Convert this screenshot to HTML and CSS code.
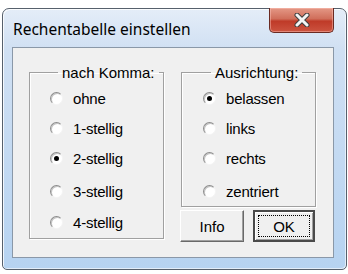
FILE: index.html
```html
<!DOCTYPE html>
<html>
  <head>
    <meta charset="utf-8" />
    <link rel="stylesheet" href="styles.css">
  </head>
  <body>
    <div class="window">
      <div class="titlebar">
        <span class="title">Rechentabelle einstellen</span>
        <button class="close">
          <svg width="16" height="14" viewBox="0 0 16 14">
            <path d="M3 2 L13 12 M13 2 L3 12" stroke="#3e3e3e" stroke-width="5" stroke-linecap="round" />
            <path d="M3 2 L13 12 M13 2 L3 12" stroke="#f4f4f4" stroke-width="3" stroke-linecap="round" />
          </svg>
        </button>
      </div>
      <div class="client">
        <fieldset class="group group-komma">
          <legend>nach Komma:</legend>
          <label class="option"><span class="radio"></span>ohne</label>
          <label class="option"><span class="radio"></span>1-stellig</label>
          <label class="option"><span class="radio checked"></span>2-stellig</label>
          <label class="option"><span class="radio"></span>3-stellig</label>
          <label class="option"><span class="radio"></span>4-stellig</label>
        </fieldset>
        <div class="side">
          <fieldset class="group group-align">
            <legend>Ausrichtung:</legend>
            <label class="option"><span class="radio checked"></span>belassen</label>
            <label class="option"><span class="radio"></span>links</label>
            <label class="option"><span class="radio"></span>rechts</label>
            <label class="option"><span class="radio"></span>zentriert</label>
          </fieldset>
          <div class="buttons">
            <button class="btn btn-info">Info</button>
            <button class="btn btn-ok"><span class="focus">OK</span></button>
          </div>
        </div>
      </div>
    </div>
  </body>
</html>
```

FILE: styles.css
```css
* {
  margin: 0;
  padding: 0;
  box-sizing: border-box;
}

body {
  background-color: #fff;
  font-family: 'Liberation Sans', Arial, sans-serif;
  font-size: 15px;
  color: #000;
}

/* Fensterrahmen */
.window {
  width: 345px;
  height: 262px;
  margin: 8px 0 0 2px;
  border: 1px solid #56606c;
  border-radius: 7px 7px 5px 5px;
  background: linear-gradient(#e4edf8, #d0e0f3 40px, #b6d3f1);
  box-shadow: inset 1px 1px 0 rgba(255, 255, 255, 0.8), inset -1px -1px 0 rgba(255, 255, 255, 0.6);
}

.titlebar {
  height: 38px;
  display: flex;
  align-items: flex-start;
}

.title {
  font-family: 'Noto Sans', sans-serif;
  font-size: 15.5px;
  margin: 9px 0 0 10px;
  color: #000;
}

.close {
  margin-left: auto;
  margin-right: 12px;
  margin-top: -1px;
  width: 65px;
  height: 25px;
  border: 1px solid #6a2a22;
  border-top: none;
  border-radius: 0 0 5px 5px;
  background: linear-gradient(#e49886, #d06e5a 45%, #bf3a28 55%, #cc5440);
  box-shadow: inset 0 0 0 1px rgba(255, 200, 190, 0.45);
  display: flex;
  align-items: center;
  justify-content: center;
}

/* Client-Bereich */
.client {
  height: 211px;
  margin: 0 12px 0 9px;
  border: 1px solid #8a98a8;
  background-color: #f0f0f0;
  display: flex;
  align-items: flex-start;
  gap: 17px;
  padding: 16px 0 0 16px;
}

.group {
  width: 135px;
  border: 1px solid #a0a0a0;
  box-shadow: inset 1px 1px 0 #fff, 1px 1px 0 #fff;
  padding: 2px 0 1px 20px;
}

.group legend {
  margin-left: 8px;
  padding: 0 4px;
  line-height: 17px;
}

.group-align {
  padding-left: 21px;
  padding-bottom: 0;
}

.option {
  display: flex;
  align-items: center;
  height: 30px;
  gap: 10px;
  letter-spacing: -0.2px;
}

.option:nth-of-type(4) {
  margin-top: 3px;
}

.group-komma .option:nth-of-type(5) {
  margin-top: 1px;
}

.radio {
  width: 13px;
  height: 13px;
  border-radius: 50%;
  background-color: #fff;
  border: 1px solid;
  border-color: #8c8c8c #f4f4f4 #f4f4f4 #8c8c8c;
  box-shadow: inset 1px 1px 0 #c4c4c4;
  display: flex;
  align-items: center;
  justify-content: center;
}

.radio.checked::after {
  content: '';
  width: 5px;
  height: 5px;
  border-radius: 50%;
  background-color: #000;
}

.side {
  width: 134px;
}

.buttons {
  display: flex;
  justify-content: space-between;
  margin: 3px 0 0 -1px;
  width: 135px;
}

.btn {
  height: 32px;
  font-family: 'Liberation Sans', Arial, sans-serif;
  font-size: 15px;
  background-color: #f0f0f0;
  border: 1px solid;
  border-color: #fff #696969 #696969 #fff;
  box-shadow: inset -1px -1px 0 #a0a0a0;
}

.btn-info {
  width: 64px;
}

.btn-ok {
  width: 62px;
  border: 2px solid #4a4a4a;
  box-shadow: inset 1px 1px 0 #fff, inset -1px -1px 0 #a0a0a0;
  padding: 3px;
}

.focus {
  display: flex;
  height: 100%;
  align-items: center;
  justify-content: center;
  border: 1px dotted #000;
}
```
